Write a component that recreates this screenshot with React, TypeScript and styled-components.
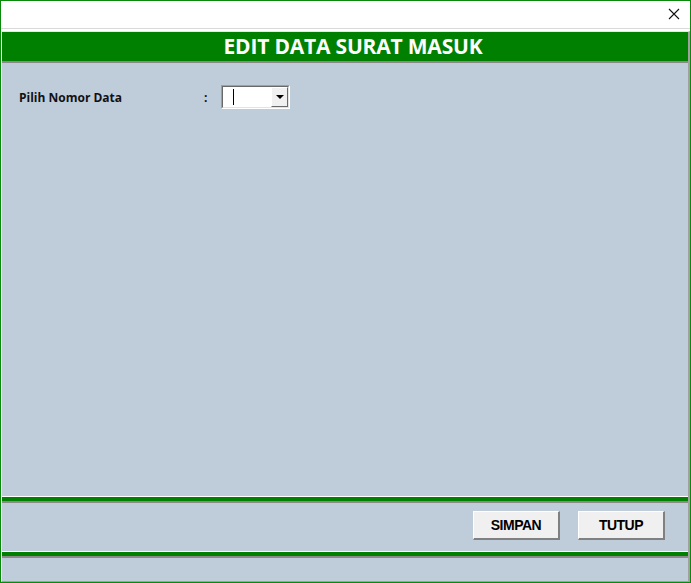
import React, {useState} from "react";
import styled, {createGlobalStyle} from "styled-components";

const GlobalStyle = createGlobalStyle`
    html, body {
        margin: 0;
        padding: 0;
        background: #ffffff;
    }
    * {
        box-sizing: border-box;
    }
`;

const StyledWindow = styled.div`
    width: 691px;
    height: 583px;
    border: 1px solid #0a8a0a;
    background: #ffffff;
    display: flex;
    flex-direction: column;
    font-family: "Open Sans", "Liberation Sans", sans-serif;
`;

const StyledTitleBar = styled.div`
    height: 28px;
    display: flex;
    justify-content: flex-end;
    align-items: center;
    padding-right: 2px;
    border-bottom: 1px solid #dadada;
`;

const StyledCloseButton = styled.button`
    width: 28px;
    height: 26px;
    border: none;
    background: transparent;
    padding: 0;
    display: flex;
    align-items: center;
    justify-content: center;
    margin-top: -2px;
`;

const StyledClient = styled.div`
    flex: 1;
    margin-top: 2px;
    display: flex;
    flex-direction: column;
    border-top: 1px solid #e8e8e8;
    border-left: 1px solid #f4f4f4;
    border-right: 2px solid #a0a0a0;
    border-bottom: 1px solid #a0a0a0;
    background: #bfcddb;
`;

const StyledHeader = styled.h1`
    margin: 0;
    height: 31px;
    padding-left: 16px;
    background: #008000;
    border-bottom: 2px solid #8a8a8a;
    color: #ffffff;
    font-size: 21px;
    font-weight: 700;
    letter-spacing: -0.2px;
    text-align: center;
    line-height: 28px;
`;

const StyledBody = styled.main`
    flex: 1;
    padding: 22px 0 0 17px;
`;

const StyledFieldRow = styled.div`
    display: flex;
    align-items: center;
    height: 24px;
`;

const StyledLabel = styled.label`
    width: 185px;
    font-size: 12px;
    font-weight: 700;
    color: #111111;
`;

const StyledColon = styled.span`
    width: 17px;
    font-size: 12px;
    font-weight: 700;
    color: #111111;
`;

const StyledCombo = styled.div`
    width: 69px;
    height: 24px;
    background: #ffffff;
    border-top: 1px solid #a0a0a0;
    border-left: 1px solid #a0a0a0;
    border-right: 1px solid #ffffff;
    border-bottom: 1px solid #ffffff;
    display: flex;
`;

const StyledComboInner = styled.div`
    flex: 1;
    display: flex;
    border-top: 1px solid #696969;
    border-left: 1px solid #696969;
    border-right: 1px solid #e3e3e3;
    border-bottom: 1px solid #e3e3e3;
`;

const StyledComboText = styled.div`
    flex: 1;
    position: relative;
`;

const StyledCaret = styled.span`
    position: absolute;
    left: 10px;
    top: 2px;
    width: 1px;
    height: 16px;
    background: #000000;
`;

const StyledDropButton = styled.div`
    width: 17px;
    background: #f0f0f0;
    border-top: 1px solid #ffffff;
    border-left: 1px solid #ffffff;
    border-right: 1px solid #696969;
    border-bottom: 1px solid #696969;
    display: flex;
    align-items: center;
    justify-content: center;
`;

const StyledArrow = styled.span`
    width: 0;
    height: 0;
    border-left: 4px solid transparent;
    border-right: 4px solid transparent;
    border-top: 4px solid #000000;
`;

const StyledSeparator = styled.div`
    height: 7px;
    flex-shrink: 0;
    border-top: 1px solid #ffffff;
    border-bottom: 2px solid #8a8a8a;
    background: #008000;
`;

const StyledButtonRow = styled.footer`
    height: 48px;
    flex-shrink: 0;
    display: flex;
    justify-content: flex-end;
    align-items: center;
    gap: 18px;
    padding: 0 23px 4px 0;
`;

const StyledButton = styled.button`
    width: 87px;
    height: 29px;
    background: #f0f0f0;
    border-top: 1px solid #ffffff;
    border-left: 1px solid #ffffff;
    border-right: 2px solid #808080;
    border-bottom: 2px solid #808080;
    font-family: "Liberation Sans", "Open Sans", sans-serif;
    font-size: 14px;
    font-weight: 700;
    color: #000000;
    letter-spacing: -0.5px;
    padding: 0;
`;

const StyledFooterSpace = styled.div`
    height: 23px;
    flex-shrink: 0;
`;

function CloseIcon() {
    return (
        <svg width="12" height="12" viewBox="0 0 12 12">
            <path d="M1 1 L11 11 M11 1 L1 11" stroke="#111111" strokeWidth="1.1"/>
        </svg>
    );
}

export default function App() {
    const [nomor] = useState("");

    return (
        <>
            <GlobalStyle/>
            <StyledWindow>
                <StyledTitleBar>
                    <StyledCloseButton aria-label="Close">
                        <CloseIcon/>
                    </StyledCloseButton>
                </StyledTitleBar>
                <StyledClient>
                    <StyledHeader>EDIT DATA SURAT MASUK</StyledHeader>
                    <StyledBody>
                        <StyledFieldRow>
                            <StyledLabel>Pilih Nomor Data</StyledLabel>
                            <StyledColon>:</StyledColon>
                            <StyledCombo>
                                <StyledComboInner>
                                    <StyledComboText>
                                        {nomor}
                                        <StyledCaret/>
                                    </StyledComboText>
                                    <StyledDropButton>
                                        <StyledArrow/>
                                    </StyledDropButton>
                                </StyledComboInner>
                            </StyledCombo>
                        </StyledFieldRow>
                    </StyledBody>
                    <StyledSeparator/>
                    <StyledButtonRow>
                        <StyledButton>SIMPAN</StyledButton>
                        <StyledButton>TUTUP</StyledButton>
                    </StyledButtonRow>
                    <StyledSeparator/>
                    <StyledFooterSpace/>
                </StyledClient>
            </StyledWindow>
        </>
    );
}
